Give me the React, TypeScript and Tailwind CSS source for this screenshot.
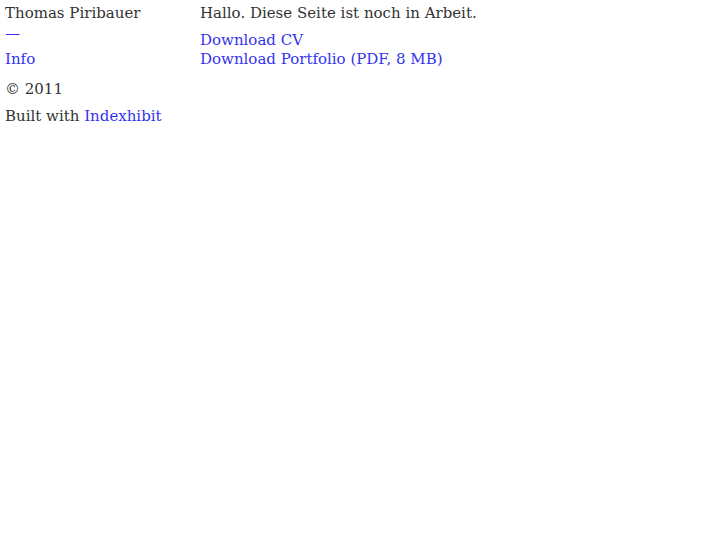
const App = () => {
  return (
    <div className="min-h-screen bg-white text-[#333] text-[15px] leading-[19px] font-['DejaVu_Serif',serif] pt-[5px] pl-[5px]">
      <div className="flex">
        <div className="w-[195px]">
          <div className="-mt-[1px]">Thomas Piribauer</div>
          <div className="text-[#3333ee] mt-[1px]">
            <a className="text-[#3333ee]" href="#">
              —
            </a>
          </div>
          <div className="mt-[7px]">
            <a className="text-[#3333ee]" href="#">
              Info
            </a>
          </div>
          <div className="mt-[11px]">© 2011</div>
          <div className="mt-[8px]">
            Built with{" "}
            <a className="text-[#3333ee]" href="#">
              Indexhibit
            </a>
          </div>
        </div>
        <div className="-mt-[1px]">
          <p>Hallo. Diese Seite ist noch in Arbeit.</p>
          <div className="mt-[8px]">
            <a className="text-[#3333ee]" href="#">
              Download CV
            </a>
          </div>
          <div>
            <a className="text-[#3333ee]" href="#">
              Download Portfolio (PDF, 8 MB)
            </a>
          </div>
        </div>
      </div>
    </div>
  );
};

export default App;
